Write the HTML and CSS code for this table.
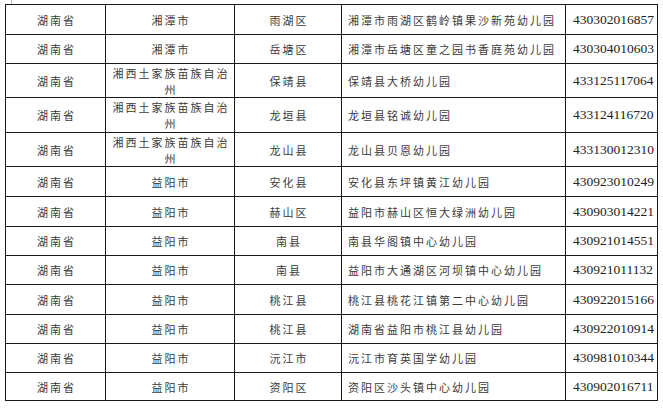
FILE: index.html
```html
<!DOCTYPE html>
<html lang="zh">
<head>
<meta charset="utf-8">
<title>幼儿园名单</title>
<link rel="stylesheet" href="styles.css">
</head>
<body>
<div class="page">
  <span class="corner"></span>
  <table class="list">
    <colgroup>
      <col class="c1"><col class="c2"><col class="c3"><col class="c4"><col class="c5">
    </colgroup>
    <tbody>
      <tr class="r30"><td class="ctr">湖南省</td><td class="ctr">湘潭市</td><td class="ctr">雨湖区</td><td class="name">湘潭市雨湖区鹤岭镇果沙新苑幼儿园</td><td class="code">430302016857</td></tr>
      <tr class="r29"><td class="ctr">湖南省</td><td class="ctr">湘潭市</td><td class="ctr">岳塘区</td><td class="name">湘潭市岳塘区童之园书香庭苑幼儿园</td><td class="code">430304010603</td></tr>
      <tr class="r34"><td class="ctr">湖南省</td><td class="ctr wrap">湘西土家族苗族自治州</td><td class="ctr">保靖县</td><td class="name">保靖县大桥幼儿园</td><td class="code">433125117064</td></tr>
      <tr class="r35"><td class="ctr">湖南省</td><td class="ctr wrap">湘西土家族苗族自治州</td><td class="ctr">龙垣县</td><td class="name">龙垣县铭诚幼儿园</td><td class="code">433124116720</td></tr>
      <tr class="r34"><td class="ctr">湖南省</td><td class="ctr wrap">湘西土家族苗族自治州</td><td class="ctr">龙山县</td><td class="name">龙山县贝恩幼儿园</td><td class="code">433130012310</td></tr>
      <tr class="r30"><td class="ctr">湖南省</td><td class="ctr">益阳市</td><td class="ctr">安化县</td><td class="name">安化县东坪镇黄江幼儿园</td><td class="code">430923010249</td></tr>
      <tr class="r30"><td class="ctr">湖南省</td><td class="ctr">益阳市</td><td class="ctr">赫山区</td><td class="name">益阳市赫山区恒大绿洲幼儿园</td><td class="code">430903014221</td></tr>
      <tr class="r29"><td class="ctr">湖南省</td><td class="ctr">益阳市</td><td class="ctr">南县</td><td class="name">南县华阁镇中心幼儿园</td><td class="code">430921014551</td></tr>
      <tr class="r29"><td class="ctr">湖南省</td><td class="ctr">益阳市</td><td class="ctr">南县</td><td class="name">益阳市大通湖区河坝镇中心幼儿园</td><td class="code">430921011132</td></tr>
      <tr class="r30"><td class="ctr">湖南省</td><td class="ctr">益阳市</td><td class="ctr">桃江县</td><td class="name">桃江县桃花江镇第二中心幼儿园</td><td class="code">430922015166</td></tr>
      <tr class="r29"><td class="ctr">湖南省</td><td class="ctr">益阳市</td><td class="ctr">桃江县</td><td class="name">湖南省益阳市桃江县幼儿园</td><td class="code">430922010914</td></tr>
      <tr class="r29"><td class="ctr">湖南省</td><td class="ctr">益阳市</td><td class="ctr">沅江市</td><td class="name">沅江市育英国学幼儿园</td><td class="code">430981010344</td></tr>
      <tr class="r28"><td class="ctr">湖南省</td><td class="ctr">益阳市</td><td class="ctr">资阳区</td><td class="name">资阳区沙头镇中心幼儿园</td><td class="code">430902016711</td></tr>
    </tbody>
  </table>
</div>
</body>
</html>
```

FILE: styles.css
```css
html, body {
  margin: 0;
  padding: 0;
  background: #ffffff;
}

.page {
  position: relative;
  padding: 4px 0 0 5px;
  width: 663px;
  height: 408px;
  box-sizing: border-box;
}

.corner {
  position: absolute;
  left: 11px;
  top: 0;
  width: 1px;
  height: 4px;
  background: #b8b8b8;
}

.list {
  border-collapse: collapse;
  table-layout: fixed;
  width: 652px;
}

.c1 { width: 100px; }
.c2 { width: 129px; }
.c3 { width: 107px; }
.c4 { width: 224px; }
.c5 { width: 92px; }

.list td {
  border: 1px solid #1a1a1a;
  padding: 0;
  color: #3a3a3a;
  font-family: "Noto Sans CJK SC", "Noto Sans", sans-serif;
  font-size: 11px;
  letter-spacing: 2px;
  line-height: 16px;
  vertical-align: middle;
  white-space: nowrap;
  overflow: hidden;
}

.list td.ctr {
  text-align: center;
  padding-left: 2px;
}

.list td.wrap {
  white-space: normal;
  padding: 0 1px 0 3px;
  line-height: 16px;
}

.list td.name {
  text-align: left;
  padding-left: 6px;
}

.list td.code {
  font-family: "Liberation Serif", "Times New Roman", serif;
  font-size: 13.5px;
  letter-spacing: 0;
  color: #222222;
  padding-left: 7px;
}

.r28 td { height: 27px; }
.r29 td { height: 28px; }
.r30 td { height: 29px; }
.r34 td { height: 33px; }
.r35 td { height: 34px; }
```
